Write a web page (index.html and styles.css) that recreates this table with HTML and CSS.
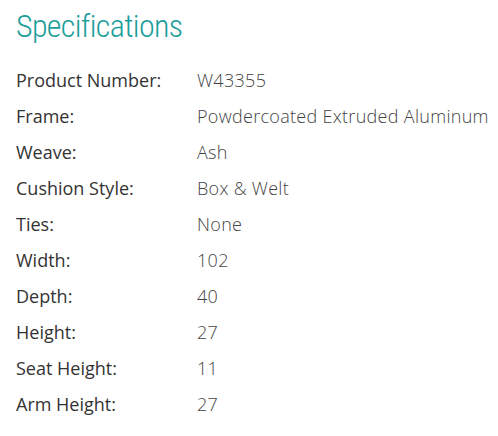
FILE: index.html
```html
<!DOCTYPE html>
<html>
<head>
<meta charset="utf-8">
<link rel="stylesheet" href="styles.css">
</head>
<body>
<section class="specs">
  <h2 class="specs-title">Specifications</h2>
  <dl class="specs-list">
    <div class="row"><dt>Product Number:</dt><dd>W43355</dd></div>
    <div class="row"><dt>Frame:</dt><dd>Powdercoated Extruded Aluminum</dd></div>
    <div class="row"><dt>Weave:</dt><dd>Ash</dd></div>
    <div class="row"><dt>Cushion Style:</dt><dd>Box &amp; Welt</dd></div>
    <div class="row"><dt>Ties:</dt><dd>None</dd></div>
    <div class="row"><dt>Width:</dt><dd>102</dd></div>
    <div class="row"><dt>Depth:</dt><dd>40</dd></div>
    <div class="row"><dt>Height:</dt><dd>27</dd></div>
    <div class="row"><dt>Seat Height:</dt><dd>11</dd></div>
    <div class="row"><dt>Arm Height:</dt><dd>27</dd></div>
  </dl>
</section>
</body>
</html>
```
FILE: styles.css
```css
html, body {
  margin: 0;
  background: #fff;
}
.specs {
  padding: 6px 0 0 16px;
}
.specs-title {
  margin: 0 0 16px;
  font-family: Roboto, sans-serif;
  font-weight: 300;
  font-stretch: 75%;
  font-size: 32px;
  line-height: 40px;
  color: #1a9e9a;
  letter-spacing: -0.65px;
}
.specs-list {
  margin: 0;
  display: grid;
  grid-template-columns: 181px 1fr;
  font-family: "Open Sans", sans-serif;
  font-size: 18px;
}
.row {
  display: contents;
}
.row dt, .row dd {
  margin: 0;
  line-height: 36px;
  white-space: nowrap;
}
.row dt {
  color: #333;
  font-weight: 400;
}
.row dd {
  color: #444;
  font-weight: 300;
  letter-spacing: 0.3px;
}
```
